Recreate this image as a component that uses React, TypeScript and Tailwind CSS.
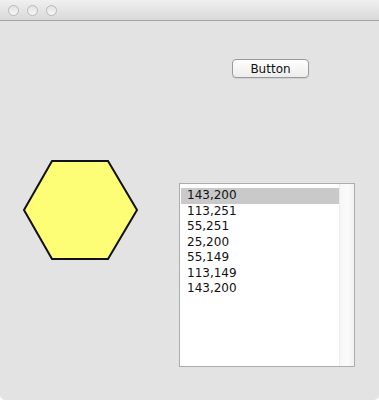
import React from 'react';

const points = [
  [143, 200],
  [113, 251],
  [55, 251],
  [25, 200],
  [55, 149],
  [113, 149],
  [143, 200],
];

function TitleBar() {
  return (
    <div className="h-[21px] flex items-center gap-[8px] pl-[8px] bg-gradient-to-b from-[#f0f0f0] to-[#d9d9d9] border-b border-[#a6a6a6]">
      {/* traffic lights, inactive window */}
      <span className="w-[11px] h-[11px] rounded-full border border-[#b9b9b9] bg-gradient-to-b from-[#e2e2e2] to-[#f7f7f7]" />
      <span className="w-[11px] h-[11px] rounded-full border border-[#b9b9b9] bg-gradient-to-b from-[#e2e2e2] to-[#f7f7f7]" />
      <span className="w-[11px] h-[11px] rounded-full border border-[#b9b9b9] bg-gradient-to-b from-[#e2e2e2] to-[#f7f7f7]" />
    </div>
  );
}

function Hexagon() {
  // screen coordinates offset by the row top (150)
  const pts = '24,60 52,11 108,11 137,60 108,109 52,109';
  return (
    <svg width="179" height="120" className="shrink-0 block">
      <polygon points={pts} fill="#fdfe75" stroke="#111" strokeWidth="2" strokeLinejoin="miter" />
    </svg>
  );
}

function PointList() {
  return (
    <div className="mt-[33px] w-[176px] h-[184px] border border-[#acacac] bg-white flex">
      <div className="flex-1 pt-[4px] pl-[1px]">
        {points.map(([x, y], i) => (
          <div
            key={i}
            className={`h-[15.5px] leading-[15.5px] pl-[6px] text-[12px] text-[#111] ${i === 0 ? 'bg-[#c9c9c9]' : ''}`}
          >
            {x},{y}
          </div>
        ))}
      </div>
      <div className="w-[15px] border-l border-[#ececec] bg-gradient-to-r from-[#f6f6f6] via-[#fbfbfb] to-[#f1f1f1]" />
    </div>
  );
}

export default function App() {
  return (
    <div
      className="w-[379px] h-[400px] bg-white"
      style={{ fontFamily: '"DejaVu Sans", "Liberation Sans", sans-serif' }}
    >
      <div className="w-full h-full rounded-b-[5px] overflow-hidden bg-[#e3e3e3] flex flex-col">
        <TitleBar />
        <div className="pt-[38px] pl-[232px] flex">
          <button className="block w-[77px] h-[19px] rounded-[4px] border border-[#9a9a9a] bg-gradient-to-b from-white to-[#ececec] text-[12px] text-[#111] leading-none shadow-[0_1px_0_rgba(0,0,0,0.08)]">
            Button
          </button>
        </div>
        <div className="mt-[72px] flex">
          <Hexagon />
          <PointList />
        </div>
      </div>
    </div>
  );
}
